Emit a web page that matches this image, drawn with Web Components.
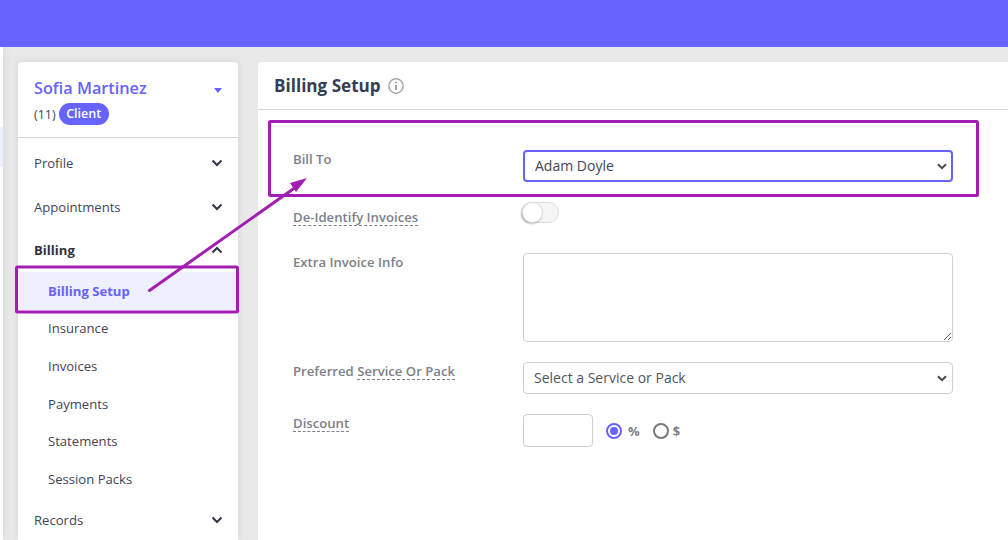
<!DOCTYPE html>
<html>
<head>
<meta charset="utf-8">
<style>
  html, body { margin: 0; height: 540px; overflow: hidden; }
  body { font-family: "Open Sans", "Liberation Sans", sans-serif; background: #e9e9e9; }
</style>
</head>
<body>
<app-page></app-page>
<script>
const PURPLE = "#6763ff";
const SELECT_ARROW = "url(\"data:image/svg+xml,%3Csvg xmlns='http://www.w3.org/2000/svg' width='10' height='7' viewBox='0 0 10 7'%3E%3Cpath d='M1 1.2l4 4 4-4' fill='none' stroke='%23454a52' stroke-width='2'/%3E%3C/svg%3E\")";

class TopBar extends HTMLElement {
  connectedCallback() {
    this.attachShadow({ mode: "open" }).innerHTML = `
    <style>:host { display: block; height: 47px; background: ${PURPLE}; }</style>`;
  }
}

class NavItem extends HTMLElement {
  connectedCallback() {
    const sub = this.hasAttribute("sub");
    const open = this.hasAttribute("open");
    const active = this.hasAttribute("active");
    const chevron = sub ? "" : `
      <svg width="12" height="8" viewBox="0 0 12 8">
        <path d="${open ? "M1.5 6.5 6 2l4.5 4.5" : "M1.5 1.5 6 6l4.5-4.5"}" fill="none" stroke="#333344" stroke-width="2" />
      </svg>`;
    this.attachShadow({ mode: "open" }).innerHTML = `
    <style>
      :host { display: block; }
      .item {
        display: flex;
        align-items: center;
        justify-content: space-between;
        height: ${sub ? 37.6 : 43.6}px;
        padding: 0 15px 0 ${sub ? 30 : 16}px;
        font-size: 13.1px;
        color: #3f4553;
        background: ${active ? "#eeefff" : "transparent"};
      }
      .open { font-weight: 700; color: #2f3340; }
      .active { font-weight: 700; color: ${PURPLE}; }
    </style>
    <div class="item ${open ? "open" : ""} ${active ? "active" : ""}"><span><slot></slot></span>${chevron}</div>`;
  }
}

class ClientCard extends HTMLElement {
  connectedCallback() {
    this.attachShadow({ mode: "open" }).innerHTML = `
    <style>
      :host {
        display: block;
        width: 220px;
        flex: none;
        background: #fff;
        border-radius: 4px 4px 0 0;
        box-shadow: 0 0 6px rgba(0,0,0,.1);
      }
      .head {
        position: relative;
        height: 76px;
        box-sizing: border-box;
        padding: 15px 16px 0;
        border-bottom: 1px solid #d6d6d6;
      }
      .name { font-size: 16.25px; line-height: 22px; font-weight: 600; color: ${PURPLE}; }
      .caret {
        position: absolute;
        right: 16px;
        top: 26px;
        border: 4px solid transparent;
        border-top: 5px solid ${PURPLE};
        border-bottom: 0;
      }
      .meta { display: flex; align-items: center; gap: 3px; margin-top: 4px; font-size: 12.5px; color: #3f4553; }
      .badge {
        font-size: 12.5px;
        font-weight: 600;
        line-height: 22px;
        padding: 0 7.5px;
        color: #fff;
        background: ${PURPLE};
        border-radius: 11px;
      }
      nav { padding-top: 3.2px; }
      .last { margin-top: 1px; }
    </style>
    <div class="head">
      <div class="name">Sofia Martinez</div>
      <span class="caret"></span>
      <div class="meta"><span>(11)</span><span class="badge">Client</span></div>
    </div>
    <nav>
      <nav-item>Profile</nav-item>
      <nav-item>Appointments</nav-item>
      <nav-item open>Billing</nav-item>
      <nav-item sub active>Billing Setup</nav-item>
      <nav-item sub>Insurance</nav-item>
      <nav-item sub>Invoices</nav-item>
      <nav-item sub>Payments</nav-item>
      <nav-item sub>Statements</nav-item>
      <nav-item sub>Session Packs</nav-item>
      <nav-item class="last">Records</nav-item>
    </nav>`;
  }
}

class FormRow extends HTMLElement {
  connectedCallback() {
    this.attachShadow({ mode: "open" }).innerHTML = `
    <style>
      :host { display: grid; grid-template-columns: 230px 430px; align-items: start; }
      .label {
        padding-top: var(--label-top, 0);
        font-size: 13.15px;
        line-height: 16px;
        font-weight: 600;
        color: #7c7f88;
      }
    </style>
    <div class="label"><slot name="label"></slot></div>
    <div class="control"><slot></slot></div>`;
  }
}

class HintText extends HTMLElement {
  connectedCallback() {
    this.attachShadow({ mode: "open" }).innerHTML = `
    <style>:host { display: inline-block; line-height: 15px; border-bottom: 1px dashed #7c7f88; }</style>
    <slot></slot>`;
  }
}

class ToggleSwitch extends HTMLElement {
  connectedCallback() {
    this.attachShadow({ mode: "open" }).innerHTML = `
    <style>
      :host {
        display: block;
        position: relative;
        width: 37px;
        height: 21px;
        margin-left: -1px;
        box-sizing: border-box;
        background: #f6f6f6;
        border: 1px solid #dcdcdc;
        border-radius: 11px;
      }
      .knob {
        position: absolute;
        left: -1px;
        top: -1px;
        width: 21px;
        height: 21px;
        box-sizing: border-box;
        background: #fff;
        border: 1px solid #dedede;
        border-radius: 50%;
        box-shadow: -1px 1px 2px rgba(0,0,0,.3);
      }
    </style>
    <div class="knob"></div>`;
  }
}

class BillingPanel extends HTMLElement {
  connectedCallback() {
    this.attachShadow({ mode: "open" }).innerHTML = `
    <style>
      :host { display: block; flex: 1; background: #fff; border-radius: 4px 0 0 0; }
      .head {
        display: flex;
        align-items: center;
        gap: 6px;
        height: 48px;
        box-sizing: border-box;
        padding-left: 16px;
        border-bottom: 1px solid #d6d6d6;
      }
      h1 { margin: 0; font-size: 17.1px; font-weight: 700; color: #333e52; }
      form { padding: 40px 0 0 35px; }
      select, input[type=text], textarea {
        display: block;
        box-sizing: border-box;
        width: 430px;
        margin: 0;
        font: 14px "Open Sans", "Liberation Sans", sans-serif;
        color: #4f5560;
        background: #fff;
        border: 1px solid #cfcfcf;
        border-radius: 4px;
        outline: none;
      }
      select {
        appearance: none;
        height: 32px;
        padding: 0 20px 2px 10px;
        background: #fff ${SELECT_ARROW} no-repeat right 5px center;
      }
      .focus {
        padding: 0 20px 2px 10px;
        border: 2px solid ${PURPLE};
        color: #3f4553;
        background-position: right 4px center;
      }
      textarea { height: 89px; }
      input[type=text] { width: 70px; height: 33px; }
      form-row { --label-top: 1px; }
      .r1 { margin-bottom: 20px; }
      .r2 { --label-top: 7px; height: 25px; margin-bottom: 26px; }
      .r3 { margin-bottom: 20px; }
      .r4 { margin-bottom: 20px; }
      .amount { display: flex; align-items: center; }
      .radio { display: flex; align-items: center; font-size: 13px; font-weight: 700; color: #7c7f88; }
      .percent { margin-left: 13px; gap: 6px; }
      .dollar { margin-left: 13px; gap: 4px; }
    </style>
    <div class="head">
      <h1>Billing Setup</h1>
      <svg width="18" height="18" viewBox="0 0 18 18">
        <circle cx="9" cy="9" r="7.2" fill="none" stroke="#a4a6ac" stroke-width="1.5" />
        <circle cx="9" cy="5.6" r="1" fill="#8f9197" />
        <path d="M9 8v5" stroke="#8f9197" stroke-width="1.7" />
      </svg>
    </div>
    <form>
      <form-row class="r1">
        <span slot="label">Bill To</span>
        <select class="focus"><option>Adam Doyle</option></select>
      </form-row>
      <form-row class="r2">
        <hint-text slot="label">De-Identify Invoices</hint-text>
        <toggle-switch></toggle-switch>
      </form-row>
      <form-row class="r3">
        <span slot="label">Extra Invoice Info</span>
        <textarea></textarea>
      </form-row>
      <form-row class="r4">
        <span slot="label">Preferred <hint-text>Service Or Pack</hint-text></span>
        <select><option>Select a Service or Pack</option></select>
      </form-row>
      <form-row>
        <hint-text slot="label">Discount</hint-text>
        <div class="amount">
          <input type="text">
          <span class="radio percent">
            <svg width="16" height="16" viewBox="0 0 16 16"><circle cx="8" cy="8" r="7" fill="none" stroke="${PURPLE}" stroke-width="2" /><circle cx="8" cy="8" r="4" fill="${PURPLE}" /></svg>%
          </span>
          <span class="radio dollar">
            <svg width="16" height="16" viewBox="0 0 16 16"><circle cx="8" cy="8" r="7" fill="none" stroke="#77777c" stroke-width="2" /></svg>$
          </span>
        </div>
      </form-row>
    </form>`;
  }
}

class CalloutLayer extends HTMLElement {
  connectedCallback() {
    this.attachShadow({ mode: "open" }).innerHTML = `
    <style>
      :host { position: absolute; left: 0; top: 0; width: 1008px; height: 540px; pointer-events: none; }
      svg { display: block; }
    </style>
    <svg width="1008" height="540" viewBox="0 0 1008 540" fill="none" stroke="#a31db3" stroke-width="3">
      <rect x="269.5" y="121.5" width="708" height="74" rx="1" />
      <rect x="16.5" y="267" width="221" height="45" rx="1" />
      <path d="M149.5 290.5 296 187" stroke-linecap="round" />
      <path d="M307 178 290 183l6 9z" fill="#a31db3" stroke="none" />
    </svg>`;
  }
}

class AppPage extends HTMLElement {
  connectedCallback() {
    this.attachShadow({ mode: "open" }).innerHTML = `
    <style>
      :host { display: block; height: 540px; overflow: hidden; position: relative; }
      .body { display: flex; height: 493px; box-sizing: border-box; }
      .rail { width: 3px; flex: none; background: #fff; padding-top: 80px; box-shadow: 0 0 8px rgba(0,0,0,.14); }
      .rail div { height: 40px; background: #eeefff; }
      .columns { display: flex; flex: 1; gap: 20px; padding: 15px 0 0 15px; }
    </style>
    <top-bar></top-bar>
    <div class="body">
      <div class="rail"><div></div></div>
      <div class="columns">
        <client-card></client-card>
        <billing-panel></billing-panel>
      </div>
    </div>
    <callout-layer></callout-layer>`;
  }
}

customElements.define("top-bar", TopBar);
customElements.define("nav-item", NavItem);
customElements.define("client-card", ClientCard);
customElements.define("form-row", FormRow);
customElements.define("hint-text", HintText);
customElements.define("toggle-switch", ToggleSwitch);
customElements.define("billing-panel", BillingPanel);
customElements.define("callout-layer", CalloutLayer);
customElements.define("app-page", AppPage);
</script>
</body>
</html>
